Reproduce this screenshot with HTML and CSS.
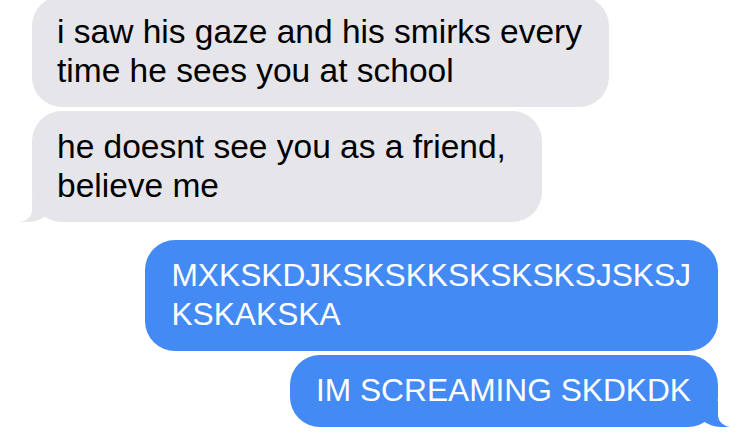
FILE: index.html
```html
<!DOCTYPE html>
<html lang="en">
<head>
    <meta charset="UTF-8">
    <meta name="viewport" content="width=device-width, initial-scale=1.0">
    <title>Messages</title>
    <link rel="stylesheet" href="styles.css">
</head>
<body>
    <div class="thread">
        <div class="group group-received">
            <div class="bubble received">i saw his gaze and his smirks every<br>time he sees you at school</div>
            <div class="bubble received tail">he doesnt see you as a friend,<br>believe me</div>
        </div>

        <div class="group group-sent">
            <div class="bubble sent">MXKSKDJKSKSKKSKSKSKSJSKSJ<br>KSKAKSKA</div>
            <div class="bubble sent tail">IM SCREAMING SKDKDK</div>
        </div>
    </div>
</body>
</html>
```

FILE: styles.css
```css
body {
    margin: 0;
    background: #ffffff;
    font-family: "Liberation Sans", Arial, sans-serif;
    overflow: hidden;
}
.thread {
    display: flex;
    flex-direction: column;
    gap: 18px;
    padding: 0 32px;
    margin-top: -4px;
}
.group {
    display: flex;
    flex-direction: column;
    gap: 4px;
}
.group-received {
    align-items: flex-start;
}
.group-sent {
    align-items: flex-end;
}
.bubble {
    position: relative;
    padding: 16px 27px 17px 25px;
    border-radius: 30px;
    line-height: 39px;
    white-space: nowrap;
}
.received {
    background: #e5e5ea;
    color: #000000;
    font-size: 33.5px;
}
.received.tail {
    padding-right: 36px;
}
.sent {
    background: #448af4;
    color: #ffffff;
    font-size: 31.7px;
    padding-left: 26px;
}

/* bubble tails */
.tail::before,
.tail::after {
    content: "";
    position: absolute;
    bottom: 0;
    height: 26px;
}
.received.tail::before {
    left: -12px;
    width: 34px;
    background: #e5e5ea;
    border-bottom-right-radius: 26px 22px;
}
.received.tail::after {
    left: -22px;
    width: 22px;
    background: #ffffff;
    border-bottom-right-radius: 14px 12px;
}
.sent.tail::before {
    right: -11px;
    width: 34px;
    background: #448af4;
    border-bottom-left-radius: 26px 22px;
}
.sent.tail::after {
    right: -21px;
    width: 21px;
    background: #ffffff;
    border-bottom-left-radius: 14px 12px;
}
```
